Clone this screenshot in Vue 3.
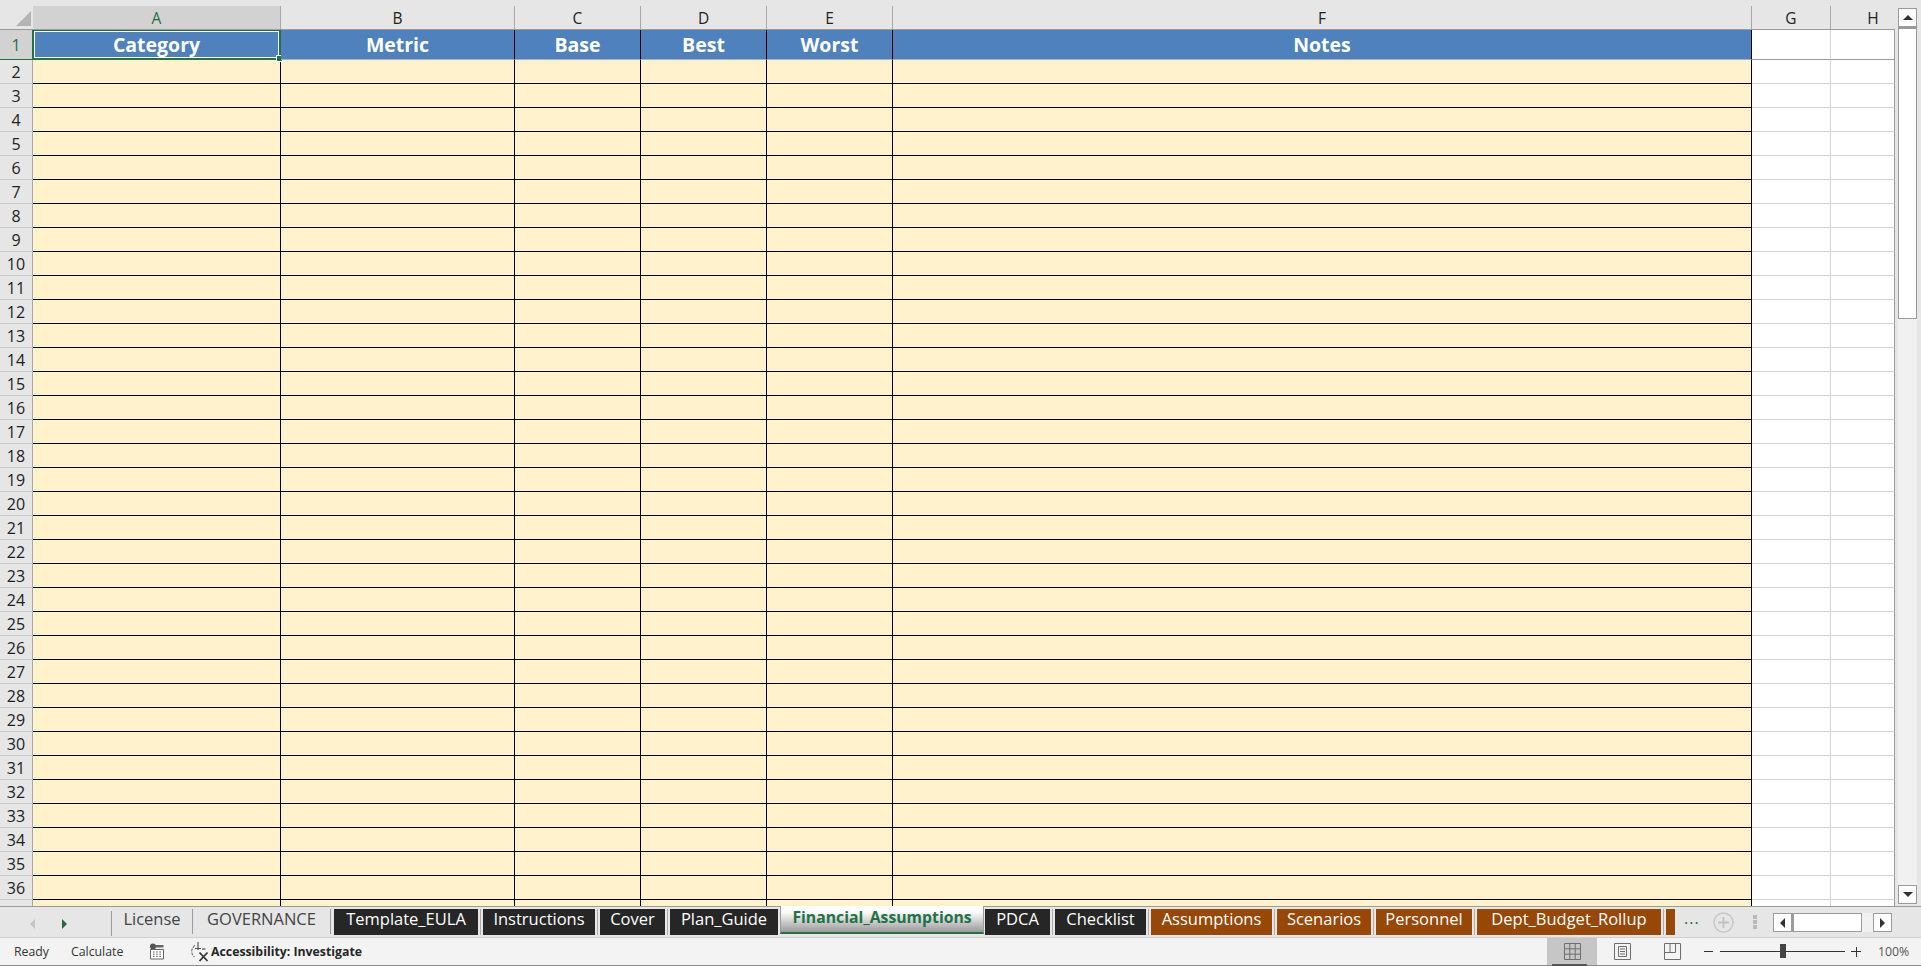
<template>
  <div class="excel">
    <div class="col-head">
      <div class="corner"><span class="corner-tri"></span></div>
      <div v-for="c in columns" :key="c" class="col-label" :class="{ on: c === 'A' }">{{ c }}</div>
    </div>

    <div class="sheet-wrap">
      <div class="sheet">
        <div class="row row-first">
          <div class="row-num on">1</div>
          <div v-for="(h, i) in headers" :key="h" class="cell head-cell" :class="{ sel: i === 0 }">
            {{ h }}
            <template v-if="i === 0">
              <span class="sel-box"></span>
              <span class="sel-handle"></span>
            </template>
          </div>
          <div class="cell blank first"></div>
          <div class="cell blank first"></div>
        </div>
        <div v-for="n in rows" :key="n" class="row">
          <div class="row-num">{{ n }}</div>
          <div v-for="i in 6" :key="i" class="cell fill"></div>
          <div class="cell blank"></div>
          <div class="cell blank"></div>
        </div>
        <div class="row">
          <div class="row-num"></div>
          <div v-for="i in 6" :key="i" class="cell fill"></div>
          <div class="cell blank"></div>
          <div class="cell blank"></div>
        </div>
      </div>

      <div class="vscroll">
        <div class="sb-btn up"><span class="tri-up"></span></div>
        <div class="sb-thumb"></div>
        <div class="sb-space"></div>
        <div class="sb-btn"><span class="tri-down"></span></div>
      </div>
    </div>

    <div class="tabbar">
      <div class="tab-nav">
        <span class="nav-left"></span>
        <span class="nav-right"></span>
      </div>
      <div class="tabs">
        <div
          v-for="t in tabs"
          :key="t.name"
          class="tab"
          :class="t.kind"
          :style="{ width: t.w + 'px' }"
        >{{ t.name }}</div>
      </div>
      <div class="more">...</div>
      <svg class="add" width="21" height="21" viewBox="0 0 21 21">
        <circle cx="10.5" cy="10.5" r="9.5" fill="none" stroke="#c8c8c8" stroke-width="1.6" />
        <path d="M10.5 5v11M5 10.5h11" stroke="#c2c2c2" stroke-width="1.8" />
      </svg>
      <div class="vdots"><i></i><i></i><i></i></div>
      <div class="hscroll">
        <div class="hb"><span class="tri-left"></span></div>
        <div class="hthumb"></div>
        <div class="htrack"></div>
        <div class="hb"><span class="tri-right"></span></div>
      </div>
    </div>

    <div class="status">
      <span class="st-ready">Ready</span>
      <span class="st-calc">Calculate</span>
      <svg class="st-cal" width="16" height="17" viewBox="0 0 16 17">
        <circle cx="4" cy="3.5" r="3" fill="#555" />
        <path d="M7 2h7.5v2.5H7z" fill="#666" />
        <path d="M1.5 6.5h13v9.5h-13z" fill="#fff" stroke="#666" />
        <path d="M4 9h1.5M7.2 9h1.5M10.4 9h1.5M4 11.2h1.5M7.2 11.2h1.5M10.4 11.2h1.5M4 13.4h1.5M7.2 13.4h1.5M10.4 13.4h1.5" stroke="#555" />
      </svg>
      <svg class="st-acc" width="22" height="21" viewBox="0 0 22 21">
        <path d="M6 4.5A7 7 0 0 0 5.5 16" fill="none" stroke="#777" stroke-width="1.2" stroke-dasharray="3 1" />
        <path d="M9 1v8M6 7.5h6" stroke="#555" stroke-width="1.2" fill="none" />
        <path d="M13 8h3.5" stroke="#555" stroke-width="1.2" />
        <path d="M10.5 11.5l8 8.5M18.5 11.5l-8 8.5" stroke="#333" stroke-width="1.8" />
      </svg>
      <span class="st-access">Accessibility: Investigate</span>
      <div class="st-right">
        <div class="view active">
          <svg width="17" height="17" viewBox="0 0 17 17">
            <path d="M.5.5h16v16H.5zM.5 5.8h16M.5 11.2h16M5.8.5v16M11.2.5v16" fill="none" stroke="#6e6e6e" />
          </svg>
        </div>
        <div class="view">
          <svg width="17" height="17" viewBox="0 0 17 17">
            <path d="M.5.5h16v16H.5z" fill="none" stroke="#6e6e6e" />
            <path d="M4.5 3.5h8v10h-8zM6 6h5M6 8.5h5M6 11h5" fill="none" stroke="#6e6e6e" />
          </svg>
        </div>
        <div class="view">
          <svg width="17" height="17" viewBox="0 0 17 17">
            <path d="M.5.5h16v16H.5zM.5 9.5h11V.5M6 .5v9" fill="none" stroke="#6e6e6e" />
          </svg>
        </div>
        <div class="zoom">
          <span class="z-minus"></span>
          <div class="z-track"><span class="z-thumb"></span></div>
          <span class="z-plus"></span>
        </div>
        <span class="z-pct">100%</span>
      </div>
    </div>
  </div>
</template>

<script setup>
const columns = ['A', 'B', 'C', 'D', 'E', 'F', 'G', 'H']
const headers = ['Category', 'Metric', 'Base', 'Best', 'Worst', 'Notes']

const rows = []
for (let i = 2; i <= 36; i++) rows.push(i)

const tabs = [
  { name: 'License', w: 81, kind: 'plain' },
  { name: 'GOVERNANCE', w: 138, kind: 'plain' },
  { name: 'Template_EULA', w: 144, kind: 'dark' },
  { name: 'Instructions', w: 112, kind: 'dark' },
  { name: 'Cover', w: 65, kind: 'dark' },
  { name: 'Plan_Guide', w: 108, kind: 'dark' },
  { name: 'Financial_Assumptions', w: 204, kind: 'active' },
  { name: 'PDCA', w: 65, kind: 'dark' },
  { name: 'Checklist', w: 91, kind: 'dark' },
  { name: 'Assumptions', w: 121, kind: 'orange' },
  { name: 'Scenarios', w: 94, kind: 'orange' },
  { name: 'Personnel', w: 96, kind: 'orange' },
  { name: 'Dept_Budget_Rollup', w: 184, kind: 'orange' },
  { name: '', w: 9, kind: 'orange' }
]
</script>

<style>
html, body { margin: 0; padding: 0; background: #e6e6e6; overflow: hidden; }
</style>

<style scoped>
.excel {
  width: 1921px;
  height: 966px;
  display: flex;
  flex-direction: column;
  overflow: hidden;
  background: #e6e6e6;
  font-family: "Open Sans", "Noto Sans", sans-serif;
}

/* column letters */
.col-head {
  display: grid;
  grid-template-columns: 33px 248px 234px 126px 126px 126px 859px 79px 84px;
  height: 29px;
  box-sizing: border-box;
  padding-top: 6px;
  flex: none;
}
.corner { position: relative; }
.corner-tri {
  position: absolute;
  right: 2px;
  bottom: 3px;
  width: 0;
  height: 0;
  border-style: solid;
  border-width: 0 0 15px 15px;
  border-color: transparent transparent #b4b4b4 transparent;
}
.col-label {
  font-size: 15.5px;
  color: #222;
  text-align: center;
  padding-top: 2px;
  line-height: 21px;
  border-right: 1px solid #a8a8a8;
  box-sizing: border-box;
}
.col-label:last-child { border-right: 0; }
.col-label.on { background: #d2d2d2; color: #217346; }

/* grid */
.sheet-wrap { display: flex; height: 877px; flex: none; }
.sheet {
  width: 1895px;
  height: 877px;
  overflow: hidden;
  flex: none;
  background: #fff;
  border-top: 1px solid #9b9b9b;
  box-sizing: border-box;
}
.row {
  display: grid;
  grid-template-columns: 33px 248px 234px 126px 126px 126px 859px 79px 64px;
  height: 24px;
}
.row-first { height: 30px; }
.row-num {
  background: #e6e6e6;
  font-size: 16px;
  color: #222;
  text-align: center;
  padding-top: 2px;
  line-height: 21px;
  border-bottom: 1px solid #c8c8c8;
  border-right: 1px solid #a8a8a8;
  box-sizing: border-box;
}
.row-num.on { background: #d2d2d2; color: #217346; padding-top: 1px; line-height: 28px; border-bottom-color: #217346; }
.cell { box-sizing: border-box; }
.fill { background: #fff2cc; border-right: 1px solid #000; border-bottom: 1px solid #000; }
.blank { background: #fff; border-right: 1px solid #d4d4d4; border-bottom: 1px solid #d4d4d4; }
.blank.first { border-bottom-color: #9b9b9b; }
.blank:last-child { border-right: 1px solid #9b9b9b; }
.head-cell {
  position: relative;
  background: #4f81bd;
  border-right: 1px solid #000;
  border-bottom: 1px solid #9fb2c8;
  color: #fff;
  font-size: 19.5px;
  font-weight: 700;
  text-align: center;
  line-height: 29px;
}
.sel { border-right-color: transparent; }
.sel-box {
  position: absolute;
  left: -1px;
  top: -1px;
  right: -1px;
  bottom: -1px;
  border: 2px solid #217346;
  box-shadow: inset 0 0 0 1px #fff;
  pointer-events: none;
}
.sel-handle {
  position: absolute;
  right: -3px;
  bottom: -3px;
  width: 5px;
  height: 5px;
  background: #217346;
  border: 1px solid #fff;
}

/* vertical scrollbar */
.vscroll {
  width: 26px;
  display: flex;
  flex-direction: column;
  padding: 0 4px 1px 3px;
  margin-top: -21px;
  height: 897px;
  box-sizing: border-box;
  flex: none;
}
.sb-btn {
  height: 19px;
  flex: none;
  background: #fff;
  border: 1px solid #9b9b9b;
  box-sizing: border-box;
  display: flex;
  align-items: center;
  justify-content: center;
}
.sb-thumb {
  height: 292px;
  background: #fff;
  border: 1px solid #9b9b9b;
  border-top-width: 2px;
  box-sizing: border-box;
  flex: none;
}
.sb-space { flex: 1; background: #f1f1f1; }
.tri-up { border: 5px solid transparent; border-top: 0; border-bottom: 5px solid #333; }
.tri-down { border: 5px solid transparent; border-bottom: 0; border-top: 5px solid #333; }

/* sheet tabs */
.tabbar {
  height: 32px;
  flex: none;
  display: flex;
  align-items: flex-start;
  border-top: 1px solid #9b9b9b;
  box-sizing: border-box;
  border-bottom: 1px solid #cfcfcf;
}
.tab-nav {
  width: 112px;
  height: 25px;
  margin-top: 4px;
  flex: none;
  display: flex;
  align-items: center;
  border-right: 1px solid #9b9b9b;
  box-sizing: border-box;
  padding-left: 30px;
  gap: 27px;
}
.nav-left { border: 5px solid transparent; border-left: 0; border-right: 5px solid #c4c4c4; }
.nav-right { border: 5px solid transparent; border-right: 0; border-left: 5px solid #1e6b41; }
.tabs { display: flex; width: 1563px; flex: none; align-items: flex-start; }
.tab {
  height: 26px;
  margin-top: 2px;
  font-size: 16.5px;
  line-height: 20px;
  text-align: center;
  white-space: nowrap;
  flex: none;
  box-sizing: border-box;
}
.tab.plain { color: #444; border-right: 1px solid #9b9b9b; height: 25px; }
.plain + .plain { margin-right: 3px; }
.tab.dark, .tab.orange {
  color: #fff;
  margin-right: 5px;
  box-shadow: 2px 0 0 #e6e6e6, 3px 0 0 #adadad;
}
.tab.dark { background: #262626; }
.tab.orange { background: #974706; }
.tab.orange:last-child { margin-right: 0; box-shadow: none; }
.tab:has(+ .active) { margin-right: 2px; box-shadow: none; }
.tab.active {
  height: 28px;
  margin-top: -1px;
  margin-right: 1px;
  background: linear-gradient(#fff, #fafafa 25%, #9a9a9a);
  color: #217346;
  font-weight: 700;
  font-size: 15.75px;
  line-height: 23px;
  border-left: 1px solid #9b9b9b;
  border-right: 1px solid #9b9b9b;
  border-bottom: 2px solid #217346;
}
.more {
  width: 38px;
  flex: none;
  color: #1e6b41;
  font-size: 16px;
  letter-spacing: 1px;
  line-height: 22px;
  padding-left: 9px;
  box-sizing: border-box;
}
.add { flex: none; margin-top: 5px; }
.vdots {
  width: 20px;
  margin-left: 19px;
  flex: none;
  display: flex;
  flex-direction: column;
  gap: 1px;
  padding-top: 8px;
  align-items: flex-start;
}
.vdots i { width: 4px; height: 4px; background: #b9b9b9; display: block; }
.hscroll { display: flex; margin-top: 6px; height: 19px; flex: none; }
.hb {
  width: 19px;
  height: 19px;
  background: #fff;
  border: 1px solid #9b9b9b;
  box-sizing: border-box;
  display: flex;
  align-items: center;
  justify-content: center;
}
.hthumb { width: 70px; background: #fff; border: 1px solid #9b9b9b; border-left-width: 2px; box-sizing: border-box; }
.htrack { width: 11px; background: #f1f1f1; }
.tri-left { border: 5px solid transparent; border-left: 0; border-right: 5px solid #333; }
.tri-right { border: 5px solid transparent; border-right: 0; border-left: 5px solid #333; }

/* status bar */
.status {
  height: 28px;
  flex: none;
  background: #f3f3f3;
  border-bottom: 1px solid #8e8e8e;
  box-sizing: border-box;
  display: flex;
  align-items: center;
  font-size: 12.3px;
  color: #333;
}
.st-ready { margin-left: 14px; width: 57px; flex: none; }
.st-calc { width: 78px; flex: none; }
.st-cal { flex: none; }
.st-acc { flex: none; margin-left: 24px; }
.st-access { font-weight: 700; color: #262626; white-space: nowrap; }
.st-right { margin-left: auto; display: flex; align-items: center; height: 100%; }
.view {
  width: 50px;
  height: 100%;
  display: flex;
  align-items: center;
  justify-content: center;
  flex: none;
}
.view.active { background: #c6c6c6; position: relative; }
.view.active::after {
  content: "";
  position: absolute;
  left: 5px;
  right: 10px;
  bottom: -1px;
  height: 2px;
  background: #555;
}
.zoom { display: flex; align-items: center; margin-left: 7px; }
.z-minus { width: 9px; height: 1px; background: #333; margin-right: 7px; }
.z-plus {
  width: 10px;
  height: 10px;
  margin-left: 6px;
  background: linear-gradient(#333, #333) center / 100% 1px no-repeat, linear-gradient(#333, #333) center / 1px 100% no-repeat;
}
.z-track { width: 125px; height: 1px; background: #333; position: relative; }
.z-thumb { position: absolute; left: 60px; top: -7px; width: 6px; height: 14px; background: #444; }
.z-pct {
  width: 30px;
  margin: 0 13px 0 17px;
  color: #555;
  white-space: nowrap;
}
</style>
